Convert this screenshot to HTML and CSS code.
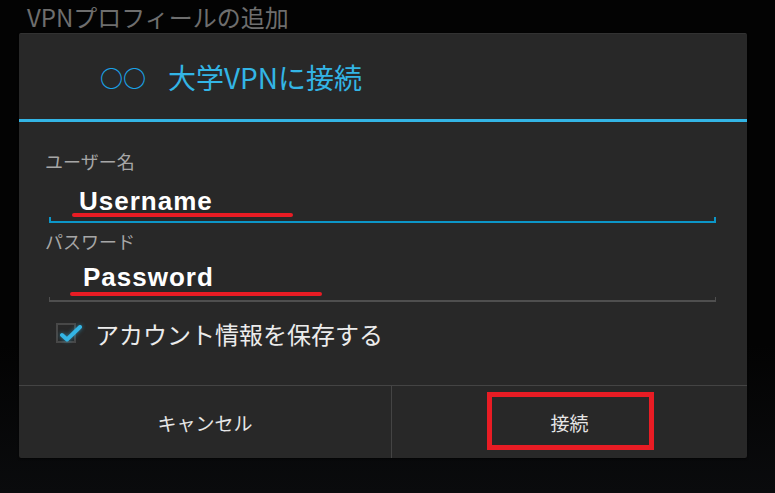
FILE: index.html
```html
<!DOCTYPE html>
<html lang="ja">
<head>
    <meta charset="UTF-8">
    <meta name="viewport" content="width=device-width, initial-scale=1.0">
    <title>VPNプロフィールの追加</title>
    <link rel="stylesheet" href="styles.css">
</head>
<body>
    <div class="screen-title">VPNプロフィールの追加</div>

    <div class="dialog">
        <div class="dialog-header">
            <span class="marks">○○</span>
            <span class="dialog-title">大学VPNに接続</span>
        </div>
        <div class="accent"></div>

        <div class="dialog-body">
            <div class="field-label">ユーザー名</div>
            <div class="field-input active user">
                <div class="field-value">Username</div>
                <div class="red-mark"></div>
                <div class="field-line"></div>
            </div>

            <div class="field-label second">パスワード</div>
            <div class="field-input pass">
                <div class="field-value">Password</div>
                <div class="red-mark"></div>
                <div class="field-line"></div>
            </div>

            <div class="check-row">
                <div class="checkbox">
                    <svg class="check" width="26" height="20" viewBox="0 0 26 20">
                        <path d="M4 12 L9 16.5 L22 4" fill="none" stroke="#33b5e5" stroke-width="4" stroke-linecap="round" stroke-linejoin="round"/>
                    </svg>
                </div>
                <span class="check-text">アカウント情報を保存する</span>
            </div>
        </div>

        <div class="buttons">
            <div class="btn cancel">キャンセル</div>
            <div class="btn connect">
                接続
                <div class="red-box"></div>
            </div>
        </div>
    </div>
</body>
</html>
```

FILE: styles.css
```css
* {
    margin: 0;
    padding: 0;
    box-sizing: border-box;
}

body {
    width: 775px;
    height: 493px;
    overflow: hidden;
    background: linear-gradient(#030303, #030303 70%, #0a0b0d);
    font-family: 'Noto Sans CJK JP', 'Noto Sans', sans-serif;
}

.screen-title {
    height: 33px;
    line-height: 34px;
    padding-left: 27px;
    font-size: 24px;
    color: #6e6e6e;
    white-space: nowrap;
}

.dialog {
    width: 728px;
    margin-left: 19px;
    background-color: #282828;
    border-top: 1px solid #323232;
    border-radius: 2px;
    box-shadow: 0 1px 2px rgba(0, 0, 0, 0.6);
}

.dialog-header {
    height: 85px;
    display: flex;
    align-items: center;
    padding-left: 81px;
}

.marks {
    font-size: 23px;
    font-weight: bold;
    color: #1aa3e8;
    margin-right: 22px;
}

.dialog-title {
    font-size: 28px;
    color: #33b5e5;
}

.accent {
    height: 3px;
    background-color: #33b5e5;
}

.dialog-body {
    padding: 29px 31px 32px 26px;
}

.field-label {
    font-size: 18px;
    line-height: 20px;
    color: #a6a6a6;
}

.field-label.second {
    margin-top: 8px;
}

.field-input {
    position: relative;
    display: flex;
    flex-direction: column;
    margin-left: 4px;
    height: 52px;
}

.field-input.pass {
    height: 51px;
}

.field-value {
    font-family: 'Liberation Sans', Arial, sans-serif;
    font-weight: bold;
    font-size: 26px;
    line-height: 30px;
    letter-spacing: 1px;
    color: #ffffff;
}

.user .field-value {
    margin-top: 15px;
    padding-left: 30px;
}

.pass .field-value {
    margin-top: 11px;
    padding-left: 34px;
}

.field-line {
    margin-top: auto;
    height: 6px;
    border: 2px solid #555555;
    border-top: none;
}

.pass .field-line {
    height: 5px;
    border-width: 0 1px 2px 1px;
    border-color: #4f4f4f;
}

.active .field-line {
    border-color: #0c96c8;
}

.red-mark {
    position: absolute;
    height: 4px;
    border-radius: 2px;
    background-color: #e81c24;
}

.user .red-mark {
    left: 23px;
    top: 42px;
    width: 221px;
}

.pass .red-mark {
    left: 21px;
    top: 41px;
    width: 252px;
}

.check-row {
    display: flex;
    align-items: center;
    height: 40px;
    margin-top: 11px;
}

.checkbox {
    position: relative;
    width: 20px;
    height: 20px;
    margin-left: 11px;
    border: 2px solid #484848;
}

.check {
    position: absolute;
    left: 0;
    top: -2px;
    filter: drop-shadow(0 0 2px rgba(51, 181, 229, 0.6));
}

.check-text {
    margin-left: 19px;
    font-size: 24px;
    color: #ececec;
}

.buttons {
    display: flex;
    height: 73px;
    border-top: 1px solid #444444;
}

.btn {
    position: relative;
    display: flex;
    align-items: center;
    justify-content: center;
    font-size: 19px;
    color: #e6e6e6;
}

.cancel {
    width: 373px;
    border-right: 1px solid #444444;
}

.connect {
    flex: 1;
}

.red-box {
    position: absolute;
    left: 95px;
    top: 6px;
    width: 167px;
    height: 58px;
    border: 5px solid #e81c24;
}
```
